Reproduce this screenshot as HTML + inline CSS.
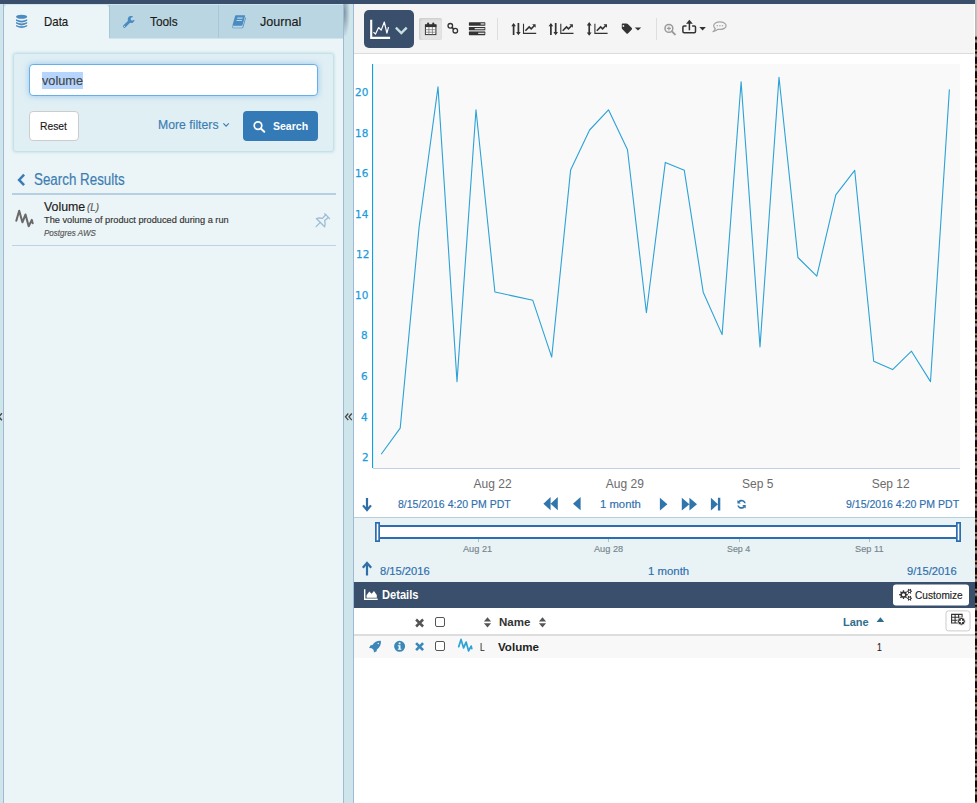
<!DOCTYPE html>
<html lang="en">
<head>
<meta charset="utf-8">
<title>Workbench</title>
<style>
html,body{margin:0;padding:0;}
body{width:977px;height:803px;overflow:hidden;background:#fff;position:relative;font-family:"Liberation Sans",sans-serif;color:#222;}
.a{position:absolute;}
.t{position:absolute;white-space:nowrap;line-height:1;transform-origin:0 0;}
svg{position:absolute;overflow:visible;}
/* frame */
#topbar{left:0;top:0;width:975px;height:4px;background:#3a4f6c;}
#rstrip1{left:975px;top:0;width:2px;height:36px;background:linear-gradient(to right,#b4b4b4,#c6c6c6);}
#rstrip2{left:975px;top:36px;width:2px;height:767px;background:#0d0b0a linear-gradient(to bottom,#0d0b0a 0,#0d0b0a 4.300px,#94744d 5px,#94744d 6.300px,#0d0b0a 7px,#0d0b0a 8.600px,#86898a 9.200px,#8f8571 11.600px,#0d0b0a 12.300px,#0d0b0a 14.200px) 0 8.900px/2px 14.200px repeat-y;}
#lstrip{left:0;top:4px;width:3px;height:799px;background:#cfe5ec;}
#lborder{left:3px;top:4px;width:1px;height:799px;background:#9fbad2;}
#lpanel{left:4px;top:4px;width:339px;height:799px;background:#ebf4f6;}
#split{left:343px;top:4px;width:9px;height:799px;background:#cfe5ec;border-left:1px solid #9fbad2;border-right:1px solid #9fbad2;}
/* tabs */
#tabbg{left:4px;top:4px;width:339px;height:34px;background:#bad6e2;border-top:1px solid #cfe5ed;box-sizing:border-box;}
#tabsep{left:218px;top:5px;width:1px;height:33px;background:#a6c8da;}
#tabdata{left:4px;top:5px;width:105px;height:34px;background:#ebf4f6;border-radius:3px 3px 0 0;}
.tab{font-size:13px;color:#1a1a1a;top:15px;}
/* search box */
#sbox{left:14px;top:54px;width:319px;height:97px;background:#e0eff4;box-shadow:0 0 3px 1px #b3d7e2;border-radius:2px;}
#sinput{left:29px;top:64px;width:287px;height:30px;background:#fff;border:1px solid #66afe9;border-radius:4px;box-shadow:0 0 6px rgba(102,175,233,.6);}
#ssel{left:42px;top:72px;width:41px;height:17px;background:#b5d5fd;}
#breset{left:29px;top:111px;width:48px;height:28px;background:#fff;border:1px solid #ccc;border-radius:4px;}
#bsearch{left:243px;top:111px;width:75px;height:30px;background:#337ab7;border-radius:4px;}
.link{color:#3b7db3;}
/* results */
.hr{height:2px;background:#b7cfe3;left:12px;width:324px;}
/* main */
#toolbar{left:354px;top:4px;width:620px;height:49px;background:#f5f5f5;border-bottom:1px solid #dcdcdc;}
#viewbtn{left:364px;top:10px;width:50px;height:38px;background:#3a4f6c;border-radius:5px;}
#calbtn{left:419px;top:18px;width:23px;height:22px;background:#e4e4e4;border-radius:2px;box-shadow:inset 1px 1px 3px rgba(0,0,0,.13);}
.vsep{width:1px;height:22px;top:18px;background:#dedede;}
#plotbg{left:373px;top:64px;width:587px;height:404px;background:#f9f9f9;}
#yaxis{left:372px;top:64px;width:1px;height:404px;background:#149fdf;box-shadow:.3px 0 0 rgba(20,159,223,.35);}
#xaxis{left:373px;top:468px;width:587px;height:1px;background:#c3cfe6;}
.yl{font-family:"DejaVu Sans","Liberation Sans",sans-serif;font-size:11px;color:#2a9fd6;right:609px;text-align:right;}
.xl{font-size:12px;color:#6b6b6b;transform:translateX(-50%);top:478px;}
.nav{font-size:12px;color:#2f6fa7;}
#rangebg{left:354px;top:517px;width:621px;height:65px;background:#e9f3f5;border-top:1px solid #b5cfdc;}
#slider{left:378px;top:525px;width:580px;height:10px;background:#fff;border-top:2px solid #2b6dae;border-bottom:2px solid #2b6dae;}
.hnd{width:3px;height:18px;top:522px;background:#fff;border:1px solid #2b6dae;box-shadow:0 0 0 .4px #2b6dae;}
.sl{font-size:11px;color:#6a7a85;transform:translateX(-50%);top:543px;}
.stick{width:1px;height:3px;top:539px;background:#9cc6cc;}
#dethead{left:354px;top:582px;width:621px;height:26px;background:#3a4f6c;}
#bcust{left:893px;top:584px;width:76px;height:21px;background:#fff;border-radius:3px;transform:translateY(.5px);}
#thead{left:354px;top:608px;width:621px;height:26px;background:#fff;border-bottom:2px solid #ddd;}
#trow{left:354px;top:636px;width:621px;height:22px;background:#f8f8f8;}
#baddcol{left:946px;top:610px;width:23px;height:19px;background:#fff;border:1px solid #ccc;border-radius:3px;transform:translate(-.5px,.4px);}
.cb{width:8px;height:8px;border:1px solid #555;border-radius:2px;background:#fff;}
</style>
</head>
<body>
<!-- frame -->
<div class="a" id="lstrip"></div><div class="a" id="lborder"></div>
<div class="a" id="lpanel"></div>
<div class="a" id="split"></div>
<div class="a" id="topbar"></div>
<div class="a" style="left:344px;top:4px;width:6px;height:32px;background:radial-gradient(ellipse 100% 80% at 0% 28%,rgba(70,90,110,.6),rgba(70,90,110,0) 100%)"></div>
<div class="a" id="rstrip1"></div><div class="a" id="rstrip2"></div>

<!-- tabs -->
<div class="a" id="tabbg"></div><div class="a" style="left:109px;top:38px;width:234px;height:1px;background:#d0e4ec"></div><div class="a" id="tabsep"></div><div class="a" style="left:109px;top:5px;width:1px;height:33px;background:#a6c8da"></div><div class="a" id="tabdata"></div>

<!-- search box -->
<div class="a" id="sbox"></div>
<div class="a" id="sinput"></div>
<div class="a" id="ssel"></div>
<div class="a" id="breset"></div>
<div class="a" id="bsearch"></div>

<!-- results -->
<div class="a hr" style="top:193px"></div>
<div class="a hr" style="top:245px;height:1px;background:#bdd3e5"></div>

<!-- main toolbar -->
<div class="a" id="toolbar"></div>
<div class="a" id="viewbtn"></div>
<div class="a" id="calbtn"></div>
<div class="a vsep" style="left:497px"></div>
<div class="a vsep" style="left:656px"></div>

<!-- chart -->
<div class="a" id="plotbg"></div>
<div class="a" id="yaxis"></div>
<div class="a" id="xaxis"></div>
<svg class="a" style="left:0;top:0" width="977" height="803"><polyline fill="none" stroke="#2ca2d6" stroke-width="1.1" stroke-linejoin="round" points="381.2,454.2 400.2,428.1 419.1,227 438,86.9 457,381.6 476,109.8 494.9,292 513.8,296.1 532.8,300.3 551.7,357.1 570.6,170.1 589.6,130 608.5,109.8 627.5,149.7 646.4,312.8 665.3,162.4 684.3,170.3 703.2,292.2 722.1,334.6 741.1,81.7 760,346.9 779,77.2 797.9,257.5 816.8,276.1 835.8,194.8 854.7,170.3 873.7,361.2 892.6,369.6 911.5,351.2 930.5,381.6 949.4,89.4"/></svg>

<!-- nav row -->

<!-- range -->
<div class="a" id="rangebg"></div>
<div class="a" id="slider"></div>
<svg class="a" style="left:0;top:0" width="977" height="803"><rect x="375.850" y="522.850" width="3.300" height="18.300" fill="#fff" stroke="#2b6dae" stroke-width="1.700"/><rect x="956.850" y="522.850" width="3.300" height="18.300" fill="#fff" stroke="#2b6dae" stroke-width="1.700"/></svg>
<div class="a stick" style="left:478px"></div><div class="a stick" style="left:608px"></div><div class="a stick" style="left:739px"></div><div class="a stick" style="left:869px"></div>

<!-- details -->
<div class="a" id="dethead"></div>
<div class="a" id="bcust"></div>
<div class="a" id="thead"></div>
<div class="a" id="trow"></div>
<div class="a" id="baddcol"></div>
<div class="a cb" style="left:435px;top:617px"></div>
<div class="a cb" style="left:435px;top:641px"></div>

<div class="t" style="left:43.7px;top:15px;font-family:'Liberation Sans',sans-serif;font-size:13px;color:#1a1a1a;-webkit-text-stroke:.16px;transform:scale(0.881,1.000)">Data</div>
<div class="t" style="left:150.0px;top:15px;font-family:'Liberation Sans',sans-serif;font-size:13px;color:#1a1a1a;-webkit-text-stroke:.16px;transform:scale(0.911,1.000)">Tools</div>
<div class="t" style="left:260.2px;top:15px;font-family:'Liberation Sans',sans-serif;font-size:13px;color:#1a1a1a;-webkit-text-stroke:.16px;transform:scale(0.968,1.000)">Journal</div>
<div class="t" style="left:42.3px;top:74px;font-family:'Liberation Sans',sans-serif;font-size:13px;color:#444;-webkit-text-stroke:.16px;transform:scale(0.977,1.000)">volume</div>
<div class="t" style="left:40.3px;top:121px;font-family:'Liberation Sans',sans-serif;font-size:12px;color:#1a1a1a;-webkit-text-stroke:.16px;transform:scale(0.859,0.933)">Reset</div>
<div class="t" style="left:158.3px;top:118px;font-family:'Liberation Sans',sans-serif;font-size:13px;color:#3b7db3;-webkit-text-stroke:.16px;transform:scale(0.941,1.000)">More filters</div>
<div class="t" style="left:272.5px;top:121px;font-family:'Liberation Sans',sans-serif;font-size:12px;font-weight:bold;color:#fff;transform:scale(0.877,0.933)">Search</div>
<div class="t" style="left:33.8px;top:171px;font-family:'Liberation Sans',sans-serif;font-size:15px;color:#3b7db3;-webkit-text-stroke:.16px;transform:scale(0.891,1.040)">Search Results</div>
<div class="t" style="left:43.6px;top:200px;font-family:'Liberation Sans',sans-serif;font-size:13px;color:#1a1a1a;-webkit-text-stroke:.16px;transform:scale(0.951,1.000)">Volume</div>
<div class="t" style="left:87.3px;top:201px;font-family:'Liberation Sans',sans-serif;font-size:12px;font-style:italic;color:#555;-webkit-text-stroke:.16px;transform:scale(0.825,0.956)">(L)</div>
<div class="t" style="left:43.6px;top:216px;font-family:'Liberation Sans',sans-serif;font-size:10px;color:#333;-webkit-text-stroke:.16px;transform:scale(0.923,0.887)">The volume of product produced during a run</div>
<div class="t" style="left:43.6px;top:229px;font-family:'Liberation Sans',sans-serif;font-size:10px;font-style:italic;color:#555;-webkit-text-stroke:.16px;transform:scale(0.804,0.850)">Postgres AWS</div>
<div class="t" style="left:397.8px;top:499px;font-family:'Liberation Sans',sans-serif;font-size:12px;color:#2d6eae;-webkit-text-stroke:.16px;transform:scale(0.875,0.944)">8/15/2016 4:20 PM PDT</div>
<div class="t" style="left:600.0px;top:499px;font-family:'Liberation Sans',sans-serif;font-size:12px;color:#2d6eae;-webkit-text-stroke:.16px;transform:scale(0.942,0.944)">1 month</div>
<div class="t" style="left:846.0px;top:499px;font-family:'Liberation Sans',sans-serif;font-size:12px;color:#2d6eae;-webkit-text-stroke:.16px;transform:scale(0.879,0.944)">9/15/2016 4:20 PM PDT</div>
<div class="t" style="left:463.4px;top:545px;font-family:'Liberation Sans',sans-serif;font-size:10px;color:#75858c;-webkit-text-stroke:.16px;transform:scale(0.918,0.825)">Aug 21</div>
<div class="t" style="left:593.8px;top:545px;font-family:'Liberation Sans',sans-serif;font-size:10px;color:#75858c;-webkit-text-stroke:.16px;transform:scale(0.918,0.825)">Aug 28</div>
<div class="t" style="left:727.4px;top:545px;font-family:'Liberation Sans',sans-serif;font-size:10px;color:#75858c;-webkit-text-stroke:.16px;transform:scale(0.888,0.825)">Sep 4</div>
<div class="t" style="left:855.2px;top:545px;font-family:'Liberation Sans',sans-serif;font-size:10px;color:#75858c;-webkit-text-stroke:.16px;transform:scale(0.921,0.825)">Sep 11</div>
<div class="t" style="left:380.2px;top:566px;font-family:'Liberation Sans',sans-serif;font-size:11px;color:#2d6eae;-webkit-text-stroke:.16px;transform:scale(1.016,0.963)">8/15/2016</div>
<div class="t" style="left:648.2px;top:566px;font-family:'Liberation Sans',sans-serif;font-size:11px;color:#2d6eae;-webkit-text-stroke:.16px;transform:scale(1.035,0.962)">1 month</div>
<div class="t" style="left:907.4px;top:566px;font-family:'Liberation Sans',sans-serif;font-size:11px;color:#2d6eae;-webkit-text-stroke:.16px;transform:scale(1.016,0.963)">9/15/2016</div>
<div class="t" style="left:382.2px;top:588px;font-family:'Liberation Sans',sans-serif;font-size:13px;font-weight:bold;color:#fff;transform:scale(0.854,1.000)">Details</div>
<div class="t" style="left:914.9px;top:590px;font-family:'Liberation Sans',sans-serif;font-size:11px;color:#222;-webkit-text-stroke:.16px;transform:scale(0.918,0.962)">Customize</div>
<div class="t" style="left:498.7px;top:617px;font-family:'Liberation Sans',sans-serif;font-size:12px;font-weight:bold;color:#333;transform:scale(0.960,0.944)">Name</div>
<div class="t" style="left:842.7px;top:617px;font-family:'Liberation Sans',sans-serif;font-size:12px;font-weight:bold;color:#2e6d8e;transform:scale(0.918,0.944)">Lane</div>
<div class="t" style="left:479.7px;top:641px;font-family:'Liberation Sans',sans-serif;font-size:12px;color:#333;-webkit-text-stroke:.16px;transform:scale(0.686,0.956)">L</div>
<div class="t" style="left:498.4px;top:641px;font-family:'Liberation Sans',sans-serif;font-size:12px;font-weight:bold;color:#222;transform:scale(0.965,0.956)">Volume</div>
<div class="t" style="left:877.0px;top:641px;font-family:'Liberation Sans',sans-serif;font-size:12px;color:#222;-webkit-text-stroke:.16px;transform:scale(0.714,0.956)">1</div>
<div class="t" style="left:354.9px;top:87px;font-family:'DejaVu Sans','Liberation Sans',sans-serif;font-size:11px;color:#1b9bdc;-webkit-text-stroke:.25px #1b9bdc;transform:scaleX(0.95)">20</div>
<div class="t" style="left:354.9px;top:128px;font-family:'DejaVu Sans','Liberation Sans',sans-serif;font-size:11px;color:#1b9bdc;-webkit-text-stroke:.25px #1b9bdc;transform:scaleX(0.95)">18</div>
<div class="t" style="left:354.9px;top:168px;font-family:'DejaVu Sans','Liberation Sans',sans-serif;font-size:11px;color:#1b9bdc;-webkit-text-stroke:.25px #1b9bdc;transform:scaleX(0.95)">16</div>
<div class="t" style="left:354.9px;top:209px;font-family:'DejaVu Sans','Liberation Sans',sans-serif;font-size:11px;color:#1b9bdc;-webkit-text-stroke:.25px #1b9bdc;transform:scaleX(0.95)">14</div>
<div class="t" style="left:355.9px;top:249px;font-family:'DejaVu Sans','Liberation Sans',sans-serif;font-size:11px;color:#1b9bdc;-webkit-text-stroke:.25px #1b9bdc;transform:scaleX(0.95)">12</div>
<div class="t" style="left:354.9px;top:290px;font-family:'DejaVu Sans','Liberation Sans',sans-serif;font-size:11px;color:#1b9bdc;-webkit-text-stroke:.25px #1b9bdc;transform:scaleX(0.95)">10</div>
<div class="t" style="left:361.0px;top:330px;font-family:'DejaVu Sans','Liberation Sans',sans-serif;font-size:11px;color:#1b9bdc;-webkit-text-stroke:.25px #1b9bdc;transform:scaleX(0.95)">8</div>
<div class="t" style="left:361.0px;top:371px;font-family:'DejaVu Sans','Liberation Sans',sans-serif;font-size:11px;color:#1b9bdc;-webkit-text-stroke:.25px #1b9bdc;transform:scaleX(0.95)">6</div>
<div class="t" style="left:361.0px;top:412px;font-family:'DejaVu Sans','Liberation Sans',sans-serif;font-size:11px;color:#1b9bdc;-webkit-text-stroke:.25px #1b9bdc;transform:scaleX(0.95)">4</div>
<div class="t" style="left:361.9px;top:452px;font-family:'DejaVu Sans','Liberation Sans',sans-serif;font-size:11px;color:#1b9bdc;-webkit-text-stroke:.25px #1b9bdc;transform:scaleX(0.95)">2</div>
<div class="t" style="left:473.6px;top:478px;font-family:'Liberation Sans',sans-serif;font-size:12px;color:#6b6b6b;">Aug 22</div>
<div class="t" style="left:605.8px;top:478px;font-family:'Liberation Sans',sans-serif;font-size:12px;color:#6b6b6b;">Aug 29</div>
<div class="t" style="left:742.0px;top:478px;font-family:'Liberation Sans',sans-serif;font-size:12px;color:#6b6b6b;">Sep 5</div>
<div class="t" style="left:871.7px;top:478px;font-family:'Liberation Sans',sans-serif;font-size:12px;color:#6b6b6b;">Sep 12</div>
<!-- icons overlay -->
<svg class="a" style="left:0;top:0" width="977" height="803" viewBox="0 0 977 803">
<!-- tab icons -->
<g fill="#4a8bc2">
 <!-- database -->
 <ellipse cx="21.600" cy="16.800" rx="5.600" ry="2.050"/>
 <path d="M16 19.300Q21.600 22 27.200 19.300L27.200 20.700Q21.600 24.300 16 20.700Z"/>
 <path d="M16 22.100Q21.600 24.800 27.200 22.100L27.200 23.600Q21.600 27.200 16 23.600Z"/>
 <path d="M16 24.900Q21.600 27.600 27.200 24.900L27.200 26.300Q21.600 29.900 16 26.300Z"/>
 <!-- wrench -->
 <path d="M134.650 20.010A3.500 3.500 0 1 1 132.950 16.370L132.580 17.320A1.600 1.600 0 1 0 133.530 19.930Z"/>
 <path d="M129.600 21.300L124.500 26.300" stroke="#4a8bc2" stroke-width="3" stroke-linecap="round" fill="none"/>
 <circle cx="124.500" cy="26.400" r=".6" fill="#bad6e2"/>
 <!-- book -->
 <path d="M235.900 15.200h8.400c.6 0 .9.400.7 1l-2.500 8.900c-.1.400-.5.700-1 .700h-8.600c-.3 0-.5-.3-.4-.6l2.600-9.300c.1-.4.400-.7.800-.7zM237.400 17.500l-.3 1.200h5.400l.3-1.200zM236.600 20.100l-.2.800h5.400l.2-.8z" fill-rule="evenodd"/>
 <path d="M232.300 26c-.5 1.200.2 2.300 1.400 2.300h8.300c.6 0 1.100-.4 1.300-1l2.600-9c.1-.5-.1-.9-.5-1.100l-2.900 10c-.1.300-.4.500-.7.500h-8.300c-.5 0-.7-.5-.5-.9z"/>
</g>
<!-- more filters chevron -->
<path d="M223.400 123.300l2.700 2.900 2.700-2.900" fill="none" stroke="#3b7db3" stroke-width="1.100"/>
<!-- search icon -->
<circle cx="258" cy="125.600" r="3.800" fill="none" stroke="#fff" stroke-width="1.700"/>
<path d="M260.800 128.500l3.500 3.300" stroke="#fff" stroke-width="2" stroke-linecap="round"/>
<!-- back chevron -->
<path d="M24.100 174.700l-5 5.200 5 5.200" fill="none" stroke="#3b7db3" stroke-width="2.500"/>
<!-- series icon (gray) -->
<path d="M16.3 220.7L19.2 210.8L22.4 222.3L25.5 214.5L28.7 226.3L31.8 219.9L32.7 223.2" fill="none" stroke="#6a6a6a" stroke-width="2.050" stroke-linejoin="round" stroke-linecap="round"/>
<!-- pin -->
<g fill="none" stroke="#9dbdd6" stroke-width="1.300" stroke-linejoin="round" stroke-linecap="round">
 <path d="M324.800 213.800l4.800 4.800"/>
 <path d="M325.700 214.800l-3.200 3.600c-2-.6-4.200-.5-6.100.1l8.200 8.200c.6-1.900.7-4.100.1-6.100l3.600-3.200"/>
 <path d="M320.300 222.400l-4.200 4.200"/>
</g>

<!-- toolbar: view button icon -->
<path d="M371.200 19.700v18.200h18.900" fill="none" stroke="#fff" stroke-width="2.100"/>
<path d="M373.500 32.100L375.500 34.100L378.600 27.500L381.200 30.100L384.300 22L386.900 33.200L388.500 27.200" fill="none" stroke="#fff" stroke-width="1.200" stroke-linejoin="round"/>
<path d="M395.900 27.700l5.400 5.300 5.400-5.300" fill="none" stroke="#c9dfe0" stroke-width="2.400"/>
<!-- calendar -->
<g>
 <rect x="425.400" y="24.900" width="10.500" height="9.700" fill="#fff" stroke="#333" stroke-width="1"/>
 <rect x="425" y="24.500" width="11.400" height="2.600" fill="#333"/>
 <path d="M428.900 27v7.500M432.400 27v7.500M425.500 29.700h10.400M425.500 32.200h10.400" stroke="#777" stroke-width=".8" fill="none"/>
 <rect x="427.100" y="22.600" width="2" height="3.200" rx=".9" fill="#333"/><rect x="432.300" y="22.600" width="2" height="3.200" rx=".9" fill="#333"/>
</g>
<!-- link -->
<g fill="none" stroke="#333" stroke-width="1.300">
 <circle cx="450.300" cy="25.800" r="2.300"/><circle cx="455.300" cy="30.700" r="2.300"/>
 <path d="M451.600 27.100l2.400 2.300" stroke-width="1.600"/>
</g>
<!-- stack -->
<g>
 <rect x="468.900" y="22.200" width="16.400" height="3.600" rx=".6" fill="#333"/><rect x="480.600" y="23.300" width="3.900" height="1.300" fill="#ddd"/>
 <rect x="468.900" y="26.900" width="16.400" height="3.500" rx=".6" fill="#333"/><rect x="474.700" y="28" width="9.800" height="1.300" fill="#ddd"/>
 <rect x="468.900" y="30.400" width="16.400" height="1.200" fill="#c8c8c8"/>
 <rect x="468.900" y="31.600" width="16.400" height="3.600" rx=".6" fill="#333"/><rect x="478.200" y="32.700" width="6.300" height="1.300" fill="#ddd"/>
</g>
<!-- axis icons -->
<g id="axi1">
 <path d="M513.600 24.500v10.500M518.400 23v10.500" fill="none" stroke="#333" stroke-width="1.700"/>
 <path d="M511.300 26.200l2.300-3.300 2.300 3.300zM516.100 31.900l2.300 3.300 2.300-3.300z" fill="#333"/>
 <path d="M523.500 23.800v9.600h12.700" fill="none" stroke="#333" stroke-width="1.100"/>
 <path d="M525.400 30.700l3.800-3.800 2 1.900 3-3" fill="none" stroke="#333" stroke-width="1.600"/>
 <path d="M532.100 24.200h3.500v3.500z" fill="#333"/>
</g>
<use href="#axi1" x="37.300"/>
<g>
 <path d="M589.200 24v10" fill="none" stroke="#333" stroke-width="1.700"/>
 <path d="M586.800 25.400l2.400-3.400 2.400 3.400zM586.800 32.400l2.400 3.400 2.400-3.400z" fill="#333"/>
 <path d="M594.900 23.800v9.600h12.700" fill="none" stroke="#333" stroke-width="1.100"/>
 <path d="M596.800 30.700l3.800-3.800 2 1.900 3-3" fill="none" stroke="#333" stroke-width="1.600"/>
 <path d="M603.500 24.200h3.500v3.500z" fill="#333"/>
</g>
<!-- tag -->
<path d="M621.800 24.500c0-.6.400-1 1-1h3.600c.5 0 1 .2 1.400.6l4 4c.4.400.4 1 0 1.400l-3.900 3.900c-.4.400-1 .4-1.400 0l-4.100-4.100c-.4-.4-.6-.9-.6-1.400zm1.600.6c-.5 0-.9.400-.9.900s.4.900.9.900.9-.4.900-.9-.4-.9-.9-.9z" fill="#333" fill-rule="evenodd"/>
<path d="M634.800 27.400h6.400l-3.200 3.200z" fill="#333"/>
<!-- zoom -->
<g fill="none" stroke="#9a9a9a">
 <circle cx="668.900" cy="28.400" r="3.900" stroke-width="1.500"/>
 <path d="M671.900 31.400l3 3" stroke-width="2" stroke-linecap="round"/>
 <path d="M666.900 28.400h4M668.900 26.400v4" stroke-width="1.100"/>
</g>
<!-- export -->
<g fill="none" stroke="#333" stroke-width="1.500">
 <path d="M686.500 25.900h-2.400c-.7 0-1.200.5-1.200 1.200v4.500c0 .7.500 1.200 1.200 1.200h10.200c.7 0 1.200-.5 1.200-1.200v-4.500c0-.7-.5-1.200-1.200-1.200h-2.200"/>
 <path d="M689.400 30.300v-8.500"/>
</g>
<path d="M686 23.700l3.400-3.900 3.400 3.900z" fill="#333"/>
<path d="M699.300 27h6.600l-3.300 3.500z" fill="#333"/>
<!-- comment -->
<g>
 <path d="M719.900 21.900c3.400 0 6.200 1.700 6.200 3.800s-2.800 3.800-6.200 3.800c-.7 0-1.400-.1-2-.2-1 .9-2.300 1.600-4.200 2 .8-.8 1.400-1.800 1.500-2.900-.9-.7-1.500-1.600-1.500-2.700 0-2.100 2.800-3.800 6.200-3.800z" fill="none" stroke="#a4a4a4" stroke-width="1.250"/>
 <circle cx="717.300" cy="25.700" r=".8" fill="#aaa"/><circle cx="719.900" cy="25.700" r=".8" fill="#aaa"/><circle cx="722.500" cy="25.700" r=".8" fill="#aaa"/>
</g>

<!-- nav icons -->
<g fill="#3175ad">
 <path d="M367 498v10.500" stroke="#2f6fa7" stroke-width="2.200" fill="none"/>
 <path d="M363 505.400l4 4.600 4-4.600" stroke="#2f6fa7" stroke-width="2.200" fill="none"/>
 <path d="M550.600 497v13.300l-7.200-6.650zM557.800 497v13.300l-7.200-6.650z"/>
 <path d="M580.600 497v13.300l-7.600-6.650z"/>
 <path d="M659.900 497.800v12.800l7.500-6.400z"/>
 <path d="M681.800 497.800v12.800l7.600-6.400zM689.400 497.800v12.800l7.600-6.400z"/>
 <path d="M710.900 497.800v12.800l7-6.400zM717.900 497.800h2.400v12.800h-2.400z"/>
 <!-- refresh -->
 <path d="M745.800 503.200c-.5-2-2.200-3.400-4.300-3.400-1.200 0-2.300.5-3.100 1.300l-1-1v3.400h3.400l-1.200-1.200c.5-.5 1.200-.8 1.900-.8 1.300 0 2.400.7 2.800 1.700zM737.300 505.400c.5 2 2.200 3.400 4.300 3.400 1.200 0 2.300-.5 3.100-1.300l1 1v-3.400h-3.400l1.200 1.200c-.5.500-1.200.8-1.900.8-1.300 0-2.400-.7-2.800-1.700z"/>
 <!-- up arrow -->
 <path d="M367 564.500v11" stroke="#2f6fa7" stroke-width="2.200" fill="none"/>
 <path d="M362.800 567.800l4.200-4.800 4.200 4.800" stroke="#2f6fa7" stroke-width="2.200" fill="none"/>
</g>

<!-- details icons -->
<path d="M364.700 589.300v10h13" fill="none" stroke="#fff" stroke-width="1.400"/>
<path d="M366.600 597.800v-2.500l2.700-3.800 2.300 2.200 2.400-2.600 2.800 3.800v2.900z" fill="#fff"/>
<!-- gears -->
<g fill="#333" fill-rule="evenodd">
 <path d="M906.63 594.01L907.85 594.07L907.85 595.33L906.63 595.39L906.20 596.43L907.03 597.33L906.13 598.23L905.23 597.40L904.19 597.83L904.13 599.05L902.87 599.05L902.81 597.83L901.77 597.40L900.87 598.23L899.97 597.33L900.80 596.43L900.37 595.39L899.15 595.33L899.15 594.07L900.37 594.01L900.80 592.97L899.97 592.07L900.87 591.17L901.77 592.00L902.81 591.57L902.87 590.35L904.13 590.35L904.19 591.57L905.23 592.00L906.13 591.17L907.03 592.07L906.20 592.97ZM905.05 594.70A1.55 1.55 0 1 0 901.95 594.70A1.55 1.55 0 1 0 905.05 594.70Z"/>
 <path d="M911.21 590.74L912.04 590.76L912.04 591.84L911.21 591.86L910.84 592.50L911.24 593.23L910.30 593.77L909.87 593.06L909.13 593.06L908.70 593.77L907.76 593.23L908.16 592.50L907.79 591.86L906.96 591.84L906.96 590.76L907.79 590.74L908.16 590.10L907.76 589.37L908.70 588.83L909.13 589.54L909.87 589.54L910.30 588.83L911.24 589.37L910.84 590.10ZM910.35 591.30A0.85 0.85 0 1 0 908.65 591.30A0.85 0.85 0 1 0 910.35 591.30Z"/>
 <path d="M911.21 597.74L912.04 597.76L912.04 598.84L911.21 598.86L910.84 599.50L911.24 600.23L910.30 600.77L909.87 600.06L909.13 600.06L908.70 600.77L907.76 600.23L908.16 599.50L907.79 598.86L906.96 598.84L906.96 597.76L907.79 597.74L908.16 597.10L907.76 596.37L908.70 595.83L909.13 596.54L909.87 596.54L910.30 595.83L911.24 596.37L910.84 597.10ZM910.35 598.30A0.85 0.85 0 1 0 908.65 598.30A0.85 0.85 0 1 0 910.35 598.30Z"/>
</g>
<!-- header x -->
<path d="M416.100 619.500l7 7M423.100 619.500l-7 7" stroke="#555" stroke-width="2.500" fill="none"/>
<!-- sort icons -->
<g fill="#555">
 <path d="M483.900 621.400h7.200l-3.600-4.200zM483.900 623.200h7.200l-3.600 4.200z"/>
 <path d="M538.900 621.400h7.200l-3.600-4.200zM538.900 623.200h7.200l-3.600 4.200z"/>
</g>
<path d="M876.600 622h7.600l-3.800-4.700z" fill="#2e6d8e"/>
<!-- add column icon -->
<g fill="none" stroke="#333" stroke-width="1.100">
 <path d="M951.600 614.400h10.500v8.600h-10.500zM951.600 617.300h10.500M951.600 620.200h10.500M955.100 614.400v8.600M958.600 614.400v8.600"/>
</g>
<circle cx="961.400" cy="621.300" r="3.900" fill="#333" stroke="#fff" stroke-width=".8"/>
<path d="M959.200 621.300h4.400M961.400 619.100v4.400" stroke="#fff" stroke-width="1.200"/>
<!-- row icons -->
<g fill="#3a87b8">
 <!-- rocket -->
 <path d="M380.900 640.900C381.300 644.500 379.800 647.300 376.900 649.400L376.600 651.200L374 652.600L373.600 650L371.800 648.200L369.100 647.900L370.600 645.200L372.500 644.900C374.600 642.100 377.300 640.600 380.900 640.900ZM378.300 642.800a.7.7 0 1 0 0 1.400a.7.7 0 1 0 0-1.400Z" fill-rule="evenodd"/>
 <!-- info -->
 <path d="M399.600 640.800a5.500 5.500 0 1 1 0 11a5.500 5.500 0 0 1 0-11zm-.9 1.700v1.700h1.800v-1.700zm-.9 2.700v1h.9v2.600h-.9v1h3.600v-1h-.9v-3.600z" fill-rule="evenodd"/>
</g>
<path d="M416.100 643.100l7 7M423.100 643.100l-7 7" stroke="#3a87b8" stroke-width="2.600" fill="none"/>
<path d="M458.7 646.7L461.0 639.4L463.6 647.9L466.1 642.1L468.6 650.9L471.1 646.1L471.8 648.6" fill="none" stroke="#2ca2d6" stroke-width="1.700" stroke-linejoin="round" stroke-linecap="round"/>
<!-- splitter chevrons -->
<path d="M348.300 413.500l-2.800 3.300 2.800 3.300M351.800 413.500l-2.800 3.300 2.800 3.300" fill="none" stroke="#444" stroke-width="1.300"/>
<path d="M1.900 413.300l-3 3.500 3 3.500" fill="none" stroke="#444" stroke-width="1.400"/>
</svg>
</body>
</html>
